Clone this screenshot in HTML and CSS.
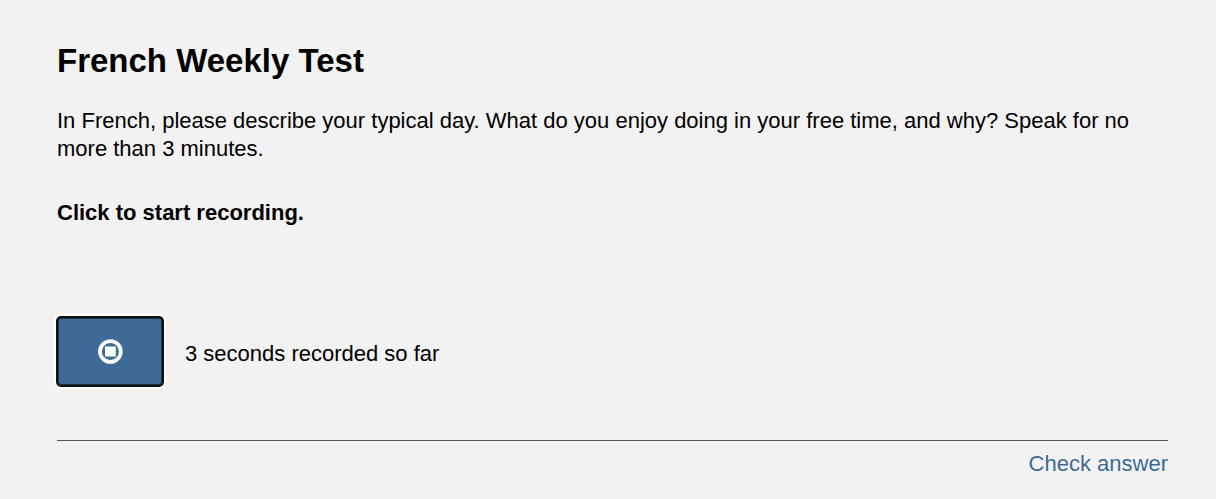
FILE: index.html
```html
<!DOCTYPE html>
<html lang="en">
<head>
    <meta charset="UTF-8">
    <meta name="viewport" content="width=device-width, initial-scale=1.0">
    <title>French Weekly Test</title>
    <link rel="stylesheet" href="styles.css">
</head>
<body>
    <main class="question">
        <h1>French Weekly Test</h1>
        <p class="prompt">In French, please describe your typical day. What do you enjoy doing in your free time, and why? Speak for no more than 3 minutes.</p>
        <p class="instruction">Click to start recording.</p>

        <div class="recorder">
            <button class="record-btn" type="button" aria-label="Stop recording">
                <svg class="stop-icon" viewBox="0 0 26 26" aria-hidden="true">
                    <circle cx="13.4" cy="12.5" r="10.4" fill="none" stroke="#fff" stroke-width="3.8"/>
                    <rect x="8" y="7.5" width="10.8" height="10" fill="#fff"/>
                </svg>
            </button>
            <span class="status">3 seconds recorded so far</span>
        </div>

        <footer>
            <a class="check-link" href="#">Check answer</a>
        </footer>
    </main>
</body>
</html>
```

FILE: styles.css
```css
* {
    margin: 0;
    padding: 0;
    box-sizing: border-box;
}

body {
    background: #f2f2f2;
    color: #000;
    font-family: "Liberation Sans", Arial, sans-serif;
    font-size: 22px;
    line-height: 28px;
}

.question {
    padding: 41px 48px 20px 57px;
}

h1 {
    font-size: 33px;
    line-height: 40px;
    margin-bottom: 26px;
}

.prompt {
    margin-bottom: 36px;
}

.instruction {
    font-weight: bold;
    margin-bottom: 90px;
}

.recorder {
    display: flex;
    align-items: center;
    gap: 22px;
    margin-bottom: 54px;
}

.record-btn {
    display: flex;
    align-items: center;
    justify-content: center;
    width: 106px;
    height: 69px;
    background: #3d6b95;
    border: 1px solid #101010;
    border-radius: 4px;
    /* focus ring: dark edge with a white halo */
    box-shadow: inset 0 0 0 1px #1c3043, 0 0 0 1px #101010, 0 0 0 3px #fff;
    cursor: pointer;
}

.stop-icon {
    width: 26px;
    height: 26px;
}

.status {
    padding-top: 4px;
}

footer {
    border-top: 1px solid #555;
    padding-top: 9px;
    text-align: right;
}

.check-link {
    color: #3d6b95;
    text-decoration: none;
}
```
